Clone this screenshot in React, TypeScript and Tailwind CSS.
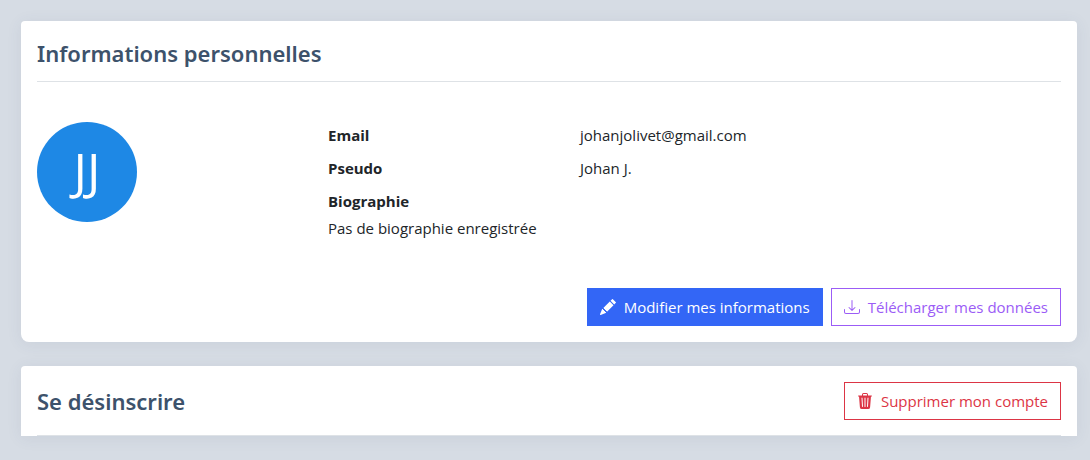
import { BsDownload, BsPencilFill, BsTrash3Fill } from "react-icons/bs";

const user = {
  email: "johanjolivet@gmail.com",
  pseudo: "Johan J.",
  initials: "JJ",
  biography: "",
};

function App() {
  return (
    <div className="min-h-screen bg-[#d6dce4] pt-[21px] pr-[13px] pb-6 pl-[21px] font-['Open_Sans','Noto_Sans',sans-serif] text-[15px] leading-6 text-[#212529]">
      {/* personal information */}
      <section className="rounded-t-[4px] rounded-b-lg bg-white p-4 shadow-[0_2px_16px_rgba(60,80,110,0.08)]">
        <h2 className="border-b border-[#dee2e6] pb-3 font-['Noto_Sans',sans-serif] text-[22px] leading-8 font-semibold text-[#3d526b]">
          Informations personnelles
        </h2>

        <div className="mt-10 grid grid-cols-[291fr_733fr]">
          <div className="flex size-[100px] items-center justify-center rounded-full bg-[#1e88e5] pb-1 text-[50px] leading-none text-white">
            {user.initials}
          </div>

          <dl className="grid grid-cols-[252fr_481fr] content-start gap-y-[9px] pt-px">
            <dt className="font-bold">Email</dt>
            <dd>{user.email}</dd>
            <dt className="font-bold">Pseudo</dt>
            <dd>{user.pseudo}</dd>
            <div className="col-span-2 flex flex-col gap-[3px]">
              <dt className="font-bold">Biographie</dt>
              <dd>{user.biography || "Pas de biographie enregistrée"}</dd>
            </div>
          </dl>
        </div>

        <div className="mt-12 flex justify-end gap-2">
          <button className="flex h-[38px] cursor-pointer items-center gap-2 border border-[#3366f6] bg-[#3366f6] px-3 text-white">
            <BsPencilFill className="size-4" />
            Modifier mes informations
          </button>
          <button className="flex h-[38px] cursor-pointer items-center gap-2 border border-[#9b5cf6] px-3 text-[#9b5cf6]">
            <BsDownload className="size-4" />
            Télécharger mes données
          </button>
        </div>
      </section>

      {/* unsubscribe */}
      <section className="mt-6 rounded-t-[4px] bg-white px-4 pt-4 shadow-[0_2px_16px_rgba(60,80,110,0.08)]">
        <div className="flex items-center justify-between border-b border-[#dee2e6] pb-[15px]">
          <h2 className="font-['Noto_Sans',sans-serif] text-[22px] leading-8 font-semibold text-[#3d526b]">
            Se désinscrire
          </h2>
          <button className="flex h-[38px] cursor-pointer items-center gap-2 border border-[#dc3545] px-3 text-[#dc3545]">
            <BsTrash3Fill className="size-4" />
            Supprimer mon compte
          </button>
        </div>
      </section>
    </div>
  );
}

export default App;
